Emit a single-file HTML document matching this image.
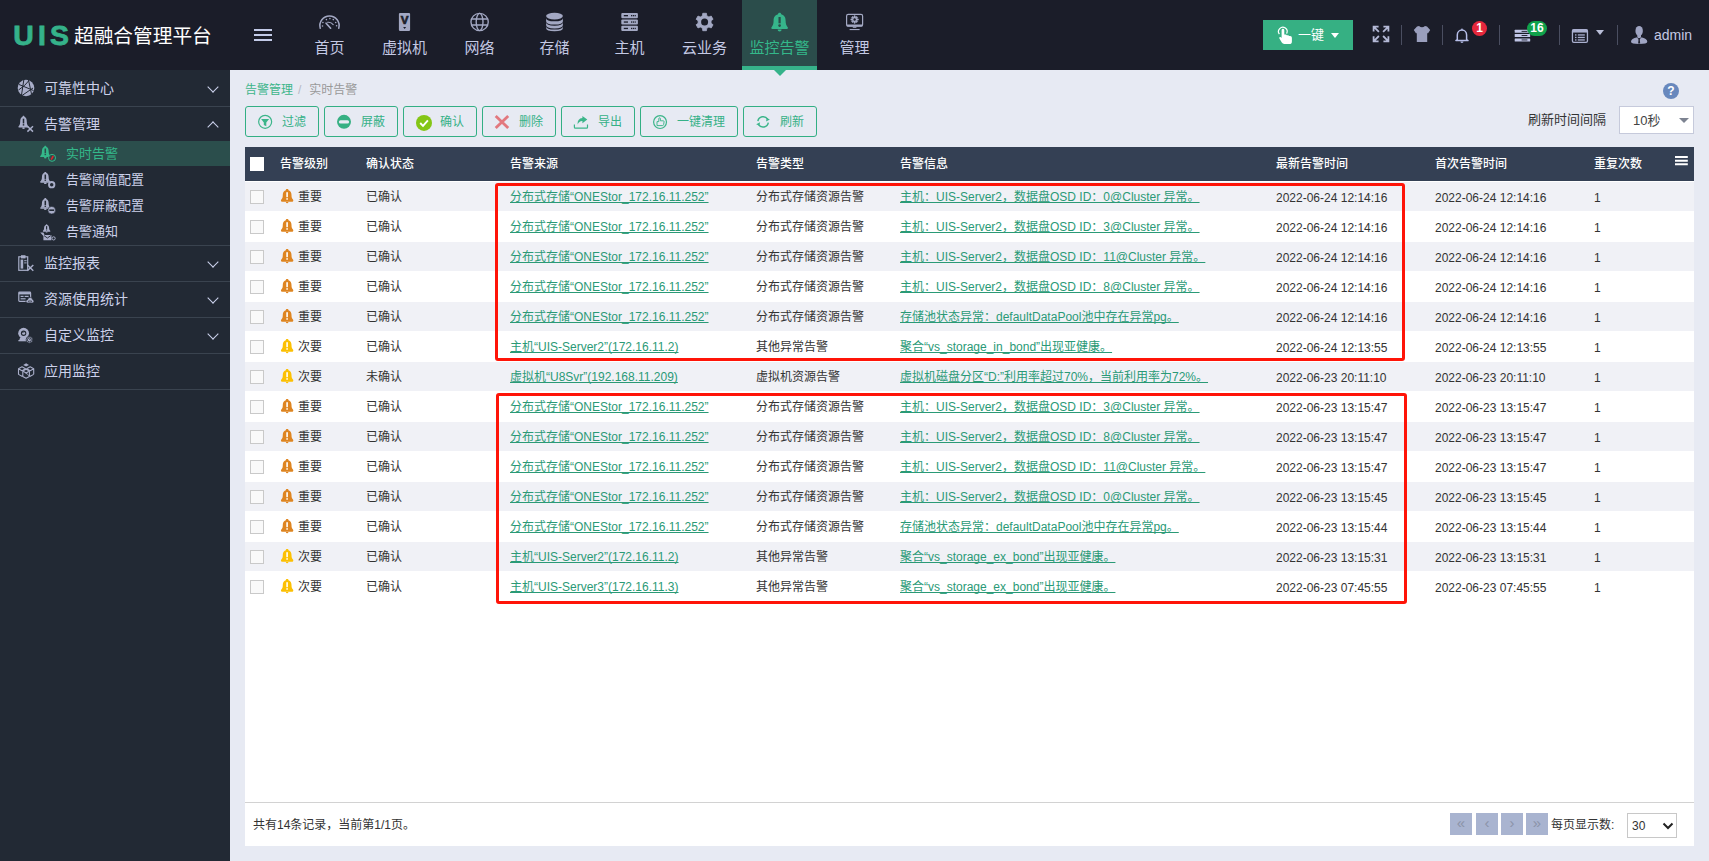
<!DOCTYPE html>
<html lang="zh-CN">
<head>
<meta charset="utf-8">
<title>UIS超融合管理平台 - 实时告警</title>
<style>
*{margin:0;padding:0;box-sizing:border-box}
html,body{width:1709px;height:861px;overflow:hidden}
body{background:#e7eaf3;font-family:"Liberation Sans","Noto Sans CJK SC",sans-serif;font-size:12px;color:#333;position:relative}
i,em,b{font-style:normal;font-weight:normal}
#hdr{position:absolute;left:0;top:0;width:1709px;height:70px;background:#1b1d29}
#logo{position:absolute;left:13.3px;top:20.4px;height:30px;color:#35b28a;font-weight:bold;font-size:28.4px;line-height:30px;letter-spacing:4.1px;white-space:nowrap;-webkit-text-stroke:.8px #35b28a}
#brand{position:absolute;left:74px;top:21px;height:30px;line-height:30px;font-size:19.7px;color:#fff;white-space:nowrap}
#burger{position:absolute;left:254px;top:29px;width:18px}
#burger i{display:block;height:2px;background:#c3cbe8;margin-bottom:3px}
.nav{position:absolute;top:0;width:75px;height:70px}
.nav.act{background:#2b4d4b;border-bottom:4px solid #36b38a}
.nav.act:after{content:"";position:absolute;left:31.5px;top:70px;border:6px solid transparent;border-top-color:#36b38a;border-bottom:0}
.nav .ni{position:absolute;left:0;top:0;width:75px;height:40px}
.nav .nt{position:absolute;left:0;top:36px;width:75px;height:24px;line-height:24px;text-align:center;font-size:15px;color:#c4c9e4;white-space:nowrap}
.nav.act .nt{color:#34b88a}
#onekey{position:absolute;left:1263px;top:20px;width:90px;height:30px;background:#36b083;color:#fff}
#onekey svg{position:absolute;left:13px;top:5px;width:18px;height:20px}
#onekey span{position:absolute;left:35px;top:0;line-height:29px;font-size:13px;white-space:nowrap}
#onekey b{position:absolute;left:68px;top:13px;border:4px solid transparent;border-top:5px solid #fff;border-bottom:0}
.hi{position:absolute}
.sep{position:absolute;top:25px;width:1px;height:20px;background:#4a4e60}
.badge{position:absolute;height:15px;line-height:15px;border-radius:8px;color:#fff;font-size:12px;font-weight:bold;text-align:center}
.badge.r{background:#e5283c}
.badge.g{background:#10a24b}
.caret{position:absolute;border:4px solid transparent;border-top:5px solid #b9bed8;border-bottom:0}
#uname{position:absolute;left:1654px;top:25px;line-height:20px;font-size:14px;color:#c4c9e4}

#side{position:absolute;left:0;top:70px;width:230px;height:791px;background:#222934}
.m1{position:absolute;left:0;width:230px;height:36px;border-top:1px solid #3a434f;color:#ccd1ea;font-size:14px}
.m1.last{height:37px;border-bottom:1px solid #3a434f}
.m1 svg{position:absolute;left:17px;top:8px;width:18px;height:18px}
.m1 span{position:absolute;left:44px;top:0;line-height:35px;white-space:nowrap}
.m1 em{position:absolute;left:209px;width:8px;height:8px;border:solid #cdd3ee;border-width:0 1.5px 1.5px 0}
.m1.first{border-top-color:transparent}
.m1 em.dn{top:12px;transform:rotate(45deg)}
.m1 em.up{top:16px;transform:rotate(-135deg)}
.m2{position:absolute;left:0;width:230px;height:26px;color:#ccd1ea;font-size:13px}
.m2.on{background:#2b4e4c;color:#34b88a;height:25px}
.m2 svg{position:absolute;left:39px;top:4px;width:18px;height:18px}
.m2 span{position:absolute;left:66px;top:0;line-height:25px;white-space:nowrap}

#main{position:absolute;left:0;top:0;width:1709px;height:861px}
#crumb{position:absolute;left:245px;top:80px;line-height:20px;font-size:12px;color:#999;white-space:nowrap}
#crumb a{color:#3cb58a}
#crumb i{margin:0 8px 0 5px;color:#b5b9c6}
#help{position:absolute;left:1663px;top:83px;width:16px;height:16px;border-radius:8px;background:#6888bd;color:#fff;font-size:12px;font-weight:bold;line-height:16px;text-align:center}
.btn{position:absolute;top:106px;height:31px;border:1px solid #32af84;border-radius:3px;color:#35b187;font-size:12px}
.btn svg{position:absolute;left:11px;top:7px;width:16px;height:16px;overflow:visible}
.btn span{position:absolute;left:36px;top:0;line-height:31px;white-space:nowrap}
#rlabel{position:absolute;left:1528px;top:110px;line-height:20px;font-size:13px;color:#333;white-space:nowrap}
#rsel{position:absolute;left:1619px;top:106px;width:75px;height:28px;border:1px solid #c6cadb;background:#fff;font-size:13px;color:#444}
#rsel span{position:absolute;left:13px;top:0;line-height:27px}
#rsel b{position:absolute;left:59px;top:11px;border:5.5px solid transparent;border-top:5.5px solid #7d8391;border-bottom:0}

#grid{position:absolute;left:245px;top:147px;width:1449px;height:699px;background:#fff}
#th{position:absolute;left:0;top:0;width:1449px;height:34px;background:#344054;color:#fff;line-height:34px;font-weight:500}
.hcb{position:absolute;left:5px;top:10px;width:14px;height:14px;background:#fff}
.hm{position:absolute;left:1430px;top:8px;width:13px;height:12px}
.tr{position:relative;height:30px;line-height:32px;top:34px;white-space:nowrap}
.tr.odd{background:#f0f1f6;border-top:1px solid #fff}
.tr.odd>*{margin-top:-1px}
.cb{position:absolute;left:5px;top:9px;width:14px;height:14px;border:1px solid #c9c9c9;background:#f9f9f9}
.lv{position:absolute;left:36px;top:8px;width:12px;height:14px;overflow:visible}
.lv.maj{fill:#de8521}
.lv.min{fill:#fcc004}
.c{position:absolute;top:0;white-space:nowrap}
.c1{left:53px}.c1h{left:35px}.c2{left:121px}.c3{left:265px}.c4{left:511px}.c5{left:655px}.c6{left:1031px}.c7{left:1190px}.c8{left:1349px}
.tr .c.d{top:1px}
.tr a{color:#2a9a76;text-decoration:underline;text-decoration-skip-ink:none}
#pager{position:absolute;left:0;top:655px;width:1449px;height:43px;border-top:1px solid #d2d2d2}
#ptxt{position:absolute;left:8px;top:11px;line-height:22px}
.pb{position:absolute;top:10px;width:22px;height:22px;background:#a9b4d0;color:#8b93a8;text-align:center;line-height:19px;font-size:15px}
#pp{position:absolute;left:1306px;top:11px;line-height:22px}
#psel{position:absolute;left:1382px;top:10px;width:50px;height:25px;border:1px solid #c8c8c8;background:#fff;font-size:12px}
#psel span{position:absolute;left:4px;top:0;line-height:24px}
#psel svg{position:absolute;left:34px;top:8px;width:12px;height:8px}
.redbox{position:absolute;border:3px solid #ff1408;border-radius:3px}

</style>
</head>
<body>
<div id="hdr">
  <div id="logo">UIS</div>
  <div id="brand">超融合管理平台</div>
  <div id="burger"><i></i><i></i><i></i></div>
<div class="nav" style="left:292px"><svg class="ni" viewBox="0 0 75 40"><g fill="none" stroke="#a3a8c3" stroke-linecap="round"><path d="M28.26 28.2 A9.6 9.6 0 1 1 46.74 28.2" stroke-width="1.5"/><path d="M34.1 23.2 L38.6 28.2" stroke-width="1.7"/><path d="M35.6 22.3 A6 6 0 0 1 41.2 24.6" stroke-width="1.1"/></g><g fill="#a3a8c3"><circle cx="30.9" cy="22.5" r=".8"/><circle cx="34.4" cy="19.6" r=".8"/><circle cx="37.9" cy="18.6" r=".8"/><circle cx="41.3" cy="19.6" r=".8"/><circle cx="43.7" cy="22.5" r=".8"/><circle cx="30.5" cy="26" r=".8"/><circle cx="44.6" cy="25.8" r=".8"/></g></svg><div class="nt">首页</div></div>
<div class="nav" style="left:367px"><svg class="ni" viewBox="0 0 75 40"><rect x="31.9" y="12.9" width="11.2" height="18.1" rx="1.2" fill="#a3a8c3"/><text x="37.6" y="24.2" font-size="11.6" font-weight="bold" text-anchor="middle" fill="#1b1d29" stroke="#1b1d29" stroke-width=".7">V</text><path d="M36.1 26.9 L39.1 26.9 L37.6 29.1 Z" fill="#1b1d29"/></svg><div class="nt">虚拟机</div></div>
<div class="nav" style="left:442px"><svg class="ni" viewBox="0 0 75 40"><g fill="none" stroke="#a3a8c3" stroke-width="1.35"><circle cx="37.6" cy="22" r="8.65"/><ellipse cx="37.6" cy="22" rx="3.4" ry="8.65"/><path d="M29.6 19 L45.6 19 M29.6 25 L45.6 25"/></g></svg><div class="nt">网络</div></div>
<div class="nav" style="left:517px"><svg class="ni" viewBox="0 0 75 40"><g fill="#a3a8c3"><ellipse cx="37.5" cy="16.1" rx="8.4" ry="3.3"/><path d="M29.1 18.2 Q29.1 21.3 37.5 21.3 Q45.9 21.3 45.9 18.2 L45.9 21.2 Q45.9 24.6 37.5 24.6 Q29.1 24.6 29.1 21.2 Z"/><path d="M29.1 22.6 Q29.1 25.7 37.5 25.7 Q45.9 25.7 45.9 22.6 L45.9 25 Q45.9 28.4 37.5 28.4 Q29.1 28.4 29.1 25 Z"/><path d="M29.1 26.4 Q29.1 29.5 37.5 29.5 Q45.9 29.5 45.9 26.4 L45.9 27.9 Q45.9 31.2 37.5 31.2 Q29.1 31.2 29.1 27.9 Z"/></g></svg><div class="nt">存储</div></div>
<div class="nav" style="left:592px"><svg class="ni" viewBox="0 0 75 40"><rect x="29.3" y="13.0" width="16.6" height="5.2" rx="1" fill="#a3a8c3"/><rect x="31.8" y="15.0" width="4.2" height="1.3" fill="#1b1d29"/><rect x="39" y="15.0" width="1.2" height="1.3" fill="#1b1d29"/><rect x="40.8" y="15.0" width="1.2" height="1.3" fill="#1b1d29"/><rect x="42.6" y="15.0" width="1.2" height="1.3" fill="#1b1d29"/><rect x="29.3" y="19.4" width="16.6" height="5.2" rx="1" fill="#a3a8c3"/><rect x="31.8" y="21.4" width="4.2" height="1.3" fill="#1b1d29"/><rect x="39" y="21.4" width="1.2" height="1.3" fill="#1b1d29"/><rect x="40.8" y="21.4" width="1.2" height="1.3" fill="#1b1d29"/><rect x="42.6" y="21.4" width="1.2" height="1.3" fill="#1b1d29"/><rect x="29.3" y="25.8" width="16.6" height="5.2" rx="1" fill="#a3a8c3"/><rect x="31.8" y="27.8" width="4.2" height="1.3" fill="#1b1d29"/><rect x="39" y="27.8" width="1.2" height="1.3" fill="#1b1d29"/><rect x="40.8" y="27.8" width="1.2" height="1.3" fill="#1b1d29"/><rect x="42.6" y="27.8" width="1.2" height="1.3" fill="#1b1d29"/></svg><div class="nt">主机</div></div>
<div class="nav" style="left:667px"><svg class="ni" viewBox="0 0 75 40"><path d="M35.43 15.77 L35.75 13.29 L39.45 13.29 L39.77 15.77 L41.91 17.00 L44.21 16.04 L46.06 19.25 L44.08 20.76 L44.08 23.24 L46.06 24.75 L44.21 27.96 L41.91 27.00 L39.77 28.23 L39.45 30.71 L35.75 30.71 L35.43 28.23 L33.29 27.00 L30.99 27.96 L29.14 24.75 L31.12 23.24 L31.12 20.76 L29.14 19.25 L30.99 16.04 L33.29 17.00 Z" fill="#a3a8c3" stroke="#a3a8c3" stroke-width="0.8" stroke-linejoin="round"/><circle cx="37.60" cy="22.00" r="3.50" fill="#1b1d29"/></svg><div class="nt">云业务</div></div>
<div class="nav act" style="left:742px"><svg class="ni" viewBox="0 0 75 40"><path d="M37.6 12.8 C38.6 12.8 39.2 13.5 39.2 14.3 C42.6 15.2 43.6 17.8 43.6 20.5 C43.6 24.3 44.5 25.8 45.7 27.2 C46.3 27.9 45.9 28.9 44.9 28.9 L30.3 28.9 C29.3 28.9 28.9 27.9 29.6 27.2 C30.7 25.8 31.6 24.3 31.6 20.5 C31.6 17.8 32.6 15.2 36 14.3 C36 13.5 36.6 12.8 37.6 12.8 Z" fill="#36b58b"/><path d="M35.6 29.4 L39.6 29.4 A2 2 0 0 1 35.6 29.4 Z" fill="#36b58b"/><rect x="36.5" y="17" width="2.2" height="6.3" fill="#2b4d4b"/><circle cx="37.6" cy="25.6" r="1.35" fill="#2b4d4b"/></svg><div class="nt">监控告警</div></div>
<div class="nav" style="left:817px"><svg class="ni" viewBox="0 0 75 40"><rect x="29.6" y="14.3" width="16" height="11.8" rx="1.6" fill="none" stroke="#a3a8c3" stroke-width="1.2"/><rect x="29.6" y="24.6" width="16" height="2" rx=".8" fill="#a3a8c3"/><rect x="35.8" y="26.6" width="3.6" height="1.2" fill="#a3a8c3"/><rect x="32.6" y="29" width="10" height="1.1" fill="#a3a8c3"/><path d="M36.98 17.08 L37.02 15.85 L38.18 15.85 L38.22 17.08 L38.87 17.35 L39.77 16.51 L40.59 17.33 L39.75 18.23 L40.02 18.88 L41.25 18.92 L41.25 20.08 L40.02 20.12 L39.75 20.77 L40.59 21.67 L39.77 22.49 L38.87 21.65 L38.22 21.92 L38.18 23.15 L37.02 23.15 L36.98 21.92 L36.33 21.65 L35.43 22.49 L34.61 21.67 L35.45 20.77 L35.18 20.12 L33.95 20.08 L33.95 18.92 L35.18 18.88 L35.45 18.23 L34.61 17.33 L35.43 16.51 L36.33 17.35 Z" fill="#a3a8c3" stroke="#a3a8c3" stroke-width="0.8" stroke-linejoin="round"/><circle cx="37.60" cy="19.50" r="1.20" fill="#1b1d29"/></svg><div class="nt">管理</div></div>
  <div id="onekey"><svg viewBox="0 0 18 20"><path d="M3.4 9.2 A4.3 4.3 0 1 1 10.6 8.6" fill="none" stroke="#fff" stroke-width="1.2"/><path d="M5.6 5.2 A1.35 1.35 0 0 1 8.3 5.2 L8.3 9.6 L9.6 9.6 Q10.6 9.6 10.8 10.3 L11.9 10.3 Q12.9 10.3 13.1 11 L14.2 11 Q15.9 11 15.9 12.8 L15.9 16.4 Q15.9 19 13.3 19 L8.3 19 Q6.6 19 5.8 17.6 L3.4 13.6 Q2.9 12.6 3.8 12.1 Q4.7 11.7 5.6 13 Z" fill="#fff"/></svg><span>一键</span><b></b></div>
  <svg class="hi" style="left:1372px;top:25px;width:18px;height:18px" viewBox="0 0 18 18"><g fill="none" stroke="#b4b9d6" stroke-width="1.8"><path d="M6.6 1.6 L1.6 1.6 L1.6 6.6 M1.6 1.6 L6.9 6.9"/><path d="M11.4 1.6 L16.4 1.6 L16.4 6.6 M16.4 1.6 L11.1 6.9"/><path d="M6.6 16.3 L1.6 16.3 L1.6 11.3 M1.6 16.3 L6.9 11"/><path d="M11.4 16.3 L16.4 16.3 L16.4 11.3 M16.4 16.3 L11.1 11"/></g></svg>
  <i class="sep" style="left:1401px"></i>
  <svg class="hi" style="left:1412px;top:25px;width:20px;height:18px" viewBox="0 0 20 18"><path d="M7 0.9 Q10 3.4 13 0.9 L15 1.6 L18.2 5 L15.9 8.4 L15.2 7.8 L15.2 17 L4.8 17 L4.8 7.8 L4.1 8.4 L1.8 5 L5 1.6 Z" fill="#9a9fbd"/></svg>
  <i class="sep" style="left:1442px"></i>
  <svg class="hi" style="left:1453px;top:27px;width:18px;height:18px" viewBox="0 0 18 18"><path d="M4.3 12.6 L4.3 8 A4.65 5 0 0 1 13.6 8 L13.6 12.6 L15 13.6 L2.9 13.6 Z" fill="none" stroke="#b6bee9" stroke-width="1.5" stroke-linejoin="round"/><path d="M7.4 14.6 L10.5 14.6 A1.55 1.3 0 0 1 7.4 14.6 Z" fill="#b6bee9"/><rect x="8.3" y="1.6" width="1.3" height="1.6" fill="#b6bee9"/></svg>
  <span class="badge r" style="left:1472px;top:21px;width:15px">1</span>
  <i class="sep" style="left:1499px"></i>
  <svg class="hi" style="left:1514px;top:28px;width:17px;height:14px" viewBox="0 0 17 14"><rect x="0.7" y="1.8" width="15.5" height="3" rx=".5" fill="#c0c5e6"/><rect x="7.6" y="2.9" width="5.8" height=".9" fill="#1b1d29"/><rect x="0.7" y="6.1" width="15.5" height="3" rx=".5" fill="#c0c5e6"/><rect x="7.6" y="7.1" width="5.8" height=".9" fill="#1b1d29"/><rect x="0.7" y="10.4" width="15.5" height="3" rx=".5" fill="#c0c5e6"/><rect x="7.6" y="11.5" width="5.8" height=".9" fill="#1b1d29"/></svg>
  <span class="badge g" style="left:1527px;top:21px;width:20px">16</span>
  <i class="sep" style="left:1559px"></i>
  <svg class="hi" style="left:1571px;top:28px;width:18px;height:16px" viewBox="0 0 18 16"><rect x="1.45" y="1.55" width="15" height="12.9" rx="1.4" fill="none" stroke="#aab0cf" stroke-width="1.3"/><rect x="1.45" y="1.55" width="15" height="3" fill="#aab0cf"/><g fill="#aab0cf"><rect x="4" y="6.3" width="1.5" height="1.3"/><rect x="6.8" y="6.3" width="7" height="1.3"/><rect x="4" y="8.8" width="1.5" height="1.3"/><rect x="6.8" y="8.8" width="7" height="1.3"/><rect x="4" y="11.3" width="1.5" height="1.3"/><rect x="6.8" y="11.3" width="7" height="1.3"/></g></svg>
  <b class="caret" style="left:1596px;top:30px"></b>
  <i class="sep" style="left:1617px"></i>
  <svg class="hi" style="left:1630px;top:25px;width:18px;height:20px" viewBox="0 0 18 20"><ellipse cx="9.15" cy="5.9" rx="3.7" ry="5" fill="#a0a5c3"/><path d="M7.3 10 L11 10 L11 12.3 Q17.3 13.6 17.3 16.8 Q17.3 19 9.15 19 Q1 19 1 16.8 Q1 13.6 7.3 12.3 Z" fill="#a0a5c3"/><path d="M8.2 13 L10.1 13 L9.7 14.3 L10.2 18.6 L8.1 18.6 L8.6 14.3 Z" fill="#1b1d29"/><path d="M7.3 12.3 L9.15 14.6 L11 12.3" fill="none" stroke="#1b1d29" stroke-width=".7"/></svg>
  <div id="uname">admin</div>
</div>
<div id="side">
  <div class="m1 first" style="top:0"><svg viewBox="0 0 18 18"><circle cx="9" cy="9" r="8.3" fill="#a9aec9"/><g fill="none" stroke="#222934" stroke-width="1"><path d="M2 5.5 L16.5 11.5 M6.8 1 L4.5 16 M11.5 1 L14.5 15 M1.5 11 Q8 7 12 1.5 M5 16.5 L16 9"/></g></svg><span>可靠性中心</span><em class="dn"></em></div>
  <div class="m1" style="top:36px"><svg viewBox="0 0 18 18"><path d="M6.50 0.80 C7.20 0.80 7.50 1.33 7.50 1.86 C9.20 2.52 9.80 4.50 9.80 6.74 C9.80 9.51 10.70 10.57 11.50 11.62 L1.50 11.62 C2.30 10.57 3.20 9.51 3.20 6.74 C3.20 4.50 3.80 2.52 5.50 1.86 C5.50 1.33 5.80 0.80 6.50 0.80 Z" fill="#a9aec9"/><rect x="1.50" y="11.10" width="10.00" height="1.45" rx="0.66" fill="#a9aec9"/><ellipse cx="6.50" cy="13.08" rx="1.30" ry="0.92" fill="#a9aec9"/><rect x="5.75" y="3.70" width="1.50" height="4.75" fill="#222934"/><rect x="5.75" y="9.12" width="1.50" height="1.45" fill="#222934"/><path d="M10.4 11.3 L16 16.6 M16 11.3 L10.4 16.6" stroke="#a9aec9" stroke-width="1.5" fill="none"/></svg><span>告警管理</span><em class="up"></em></div>
  <div class="m2 on" style="top:71px"><svg viewBox="0 0 18 18"><path d="M6.30 0.70 C7.01 0.70 7.32 1.21 7.32 1.72 C9.05 2.36 9.67 4.28 9.67 6.46 C9.67 9.15 10.58 10.17 11.40 11.20 L1.20 11.20 C2.02 10.17 2.93 9.15 2.93 6.46 C2.93 4.28 3.55 2.36 5.28 1.72 C5.28 1.21 5.59 0.70 6.30 0.70 Z" fill="#34b88a"/><rect x="1.20" y="10.68" width="10.20" height="1.41" rx="0.64" fill="#34b88a"/><ellipse cx="6.30" cy="12.60" rx="1.33" ry="0.90" fill="#34b88a"/><rect x="5.54" y="3.52" width="1.53" height="4.61" fill="#2b4e4c"/><rect x="5.54" y="8.76" width="1.53" height="1.41" fill="#2b4e4c"/><circle cx="13.05" cy="12.85" r="3.5" fill="#2b4e4c" stroke="#34b88a" stroke-width="1"/><path d="M12.2 14.6 L14.3 10.8" stroke="#e8222a" stroke-width="1.5"/></svg><span>实时告警</span></div>
  <div class="m2" style="top:97px"><svg viewBox="0 0 18 18"><path d="M6.30 0.90 C7.01 0.90 7.32 1.38 7.32 1.87 C9.05 2.47 9.67 4.29 9.67 6.35 C9.67 8.89 10.58 9.85 11.40 10.82 L1.20 10.82 C2.02 9.85 2.93 8.89 2.93 6.35 C2.93 4.29 3.55 2.47 5.28 1.87 C5.28 1.38 5.59 0.90 6.30 0.90 Z" fill="#a9aec9"/><rect x="1.20" y="10.34" width="10.20" height="1.33" rx="0.60" fill="#a9aec9"/><ellipse cx="6.30" cy="12.15" rx="1.33" ry="0.85" fill="#a9aec9"/><rect x="5.54" y="3.56" width="1.53" height="4.36" fill="#222934"/><rect x="5.54" y="8.52" width="1.53" height="1.33" fill="#222934"/><circle cx="12.7" cy="13.7" r="2.7" fill="#222934" stroke="#a9aec9" stroke-width="1.9"/></svg><span>告警阈值配置</span></div>
  <div class="m2" style="top:123px"><svg viewBox="0 0 18 18"><path d="M6.30 1.10 C7.01 1.10 7.32 1.58 7.32 2.05 C9.05 2.65 9.67 4.43 9.67 6.46 C9.67 8.95 10.58 9.91 11.40 10.86 L1.20 10.86 C2.02 9.91 2.93 8.95 2.93 6.46 C2.93 4.43 3.55 2.65 5.28 2.05 C5.28 1.58 5.59 1.10 6.30 1.10 Z" fill="#a9aec9"/><rect x="1.20" y="10.38" width="10.20" height="1.31" rx="0.60" fill="#a9aec9"/><ellipse cx="6.30" cy="12.17" rx="1.33" ry="0.83" fill="#a9aec9"/><rect x="5.54" y="3.72" width="1.53" height="4.28" fill="#222934"/><rect x="5.54" y="8.60" width="1.53" height="1.31" fill="#222934"/><circle cx="12.7" cy="13.2" r="3.8" fill="#a9aec9" stroke="#222934" stroke-width=".6"/><rect x="10.3" y="12.4" width="4.8" height="1.6" fill="#222934"/></svg><span>告警屏蔽配置</span></div>
  <div class="m2" style="top:149px"><svg viewBox="0 0 18 18"><path d="M7.60 1.30 C8.13 1.30 8.36 1.63 8.36 1.96 C9.65 2.38 10.11 3.62 10.11 5.04 C10.11 6.78 10.79 7.44 11.40 8.11 L3.80 8.11 C4.41 7.44 5.09 6.78 5.09 5.04 C5.09 3.62 5.55 2.38 6.84 1.96 C6.84 1.63 7.07 1.30 7.60 1.30 Z" fill="#a9aec9"/><rect x="3.80" y="7.77" width="7.60" height="0.91" rx="0.42" fill="#a9aec9"/><ellipse cx="7.60" cy="9.02" rx="0.99" ry="0.58" fill="#a9aec9"/><rect x="7.03" y="3.13" width="1.14" height="2.99" fill="#222934"/><rect x="7.03" y="6.53" width="1.14" height="0.91" fill="#222934"/><path d="M1.2 9.6 L4.4 9.6 L5.6 12 L12.4 12 L12.4 17.2 L4.4 17.2 L4.4 13 Z" fill="#a9aec9"/><path d="M5 12.6 L8.4 15 L11.8 12.6" fill="none" stroke="#222934" stroke-width=".9"/><circle cx="14.6" cy="15.4" r="1.6" fill="none" stroke="#a9aec9" stroke-width="1"/></svg><span>告警通知</span></div>
  <div class="m1" style="top:175px"><svg viewBox="0 0 18 18"><rect x="1.8" y="2.8" width="8.9" height="13.5" fill="none" stroke="#a9aec9" stroke-width="1.2"/><rect x="4" y="1.2" width="4.5" height="3.2" fill="#a9aec9"/><rect x="3.6" y="5.6" width="2.6" height="9" fill="#a9aec9"/><rect x="7.2" y="6.2" width="2.4" height="1" fill="#a9aec9"/><rect x="7.2" y="8.4" width="2.4" height="1" fill="#a9aec9"/><path d="M10.3 11 L16.3 16.8 M16.3 11 L10.3 16.8" stroke="#a9aec9" stroke-width="1.5" fill="none"/></svg><span>监控报表</span><em class="dn"></em></div>
  <div class="m1" style="top:211px"><svg viewBox="0 0 18 18"><rect x="1.8" y="2.2" width="11.8" height="9.1" rx=".8" fill="none" stroke="#a9aec9" stroke-width="1.2"/><rect x="1.8" y="2.2" width="11.8" height="2.2" fill="#a9aec9"/><rect x="3.6" y="5.8" width="3" height="1.2" fill="#a9aec9"/><rect x="7.6" y="5.8" width="4" height="1.2" fill="#a9aec9"/><rect x="3.6" y="8.2" width="5" height="1.2" fill="#a9aec9"/><path d="M10.6 13 Q8.9 13 8.9 11.3 Q8.9 9.8 10.5 9.7 Q11 7.3 13.2 7.3 Q15.2 7.3 15.6 9.4 Q17 9.7 17 11.3 Q17 13 15.4 13 Z" fill="#a9aec9" stroke="#222934" stroke-width=".7"/><path d="M11 11.2 L12.4 9.9 L12.4 12.4 Z M15 11.2 L13.6 9.9 L13.6 12.4 Z" fill="#222934"/></svg><span>资源使用统计</span><em class="dn"></em></div>
  <div class="m1" style="top:247px"><svg viewBox="0 0 18 18"><circle cx="6.6" cy="7.2" r="5.4" fill="#a9aec9"/><circle cx="6.6" cy="7.2" r="2.7" fill="#222934"/><circle cx="6.6" cy="7.2" r="1.5" fill="#a9aec9"/><circle cx="6" cy="6.5" r=".6" fill="#222934"/><path d="M3.2 11.6 L2.2 14.2 L11 14.2 L10 11.6 Z" fill="#a9aec9"/><rect x="1.4" y="14" width="10.4" height="1.3" fill="#a9aec9"/><circle cx="12.4" cy="13.85" r="3.3" fill="#a9aec9" stroke="#222934" stroke-width=".8"/><circle cx="12.4" cy="13.85" r="2" fill="none" stroke="#222934" stroke-width=".8"/><path d="M12.4 13.9 L13.5 12.6" stroke="#222934" stroke-width=".8"/></svg><span>自定义监控</span><em class="dn"></em></div>
  <div class="m1 last" style="top:283px"><svg viewBox="0 0 18 18"><g fill="none" stroke="#a9aec9" stroke-width="1.1" stroke-linejoin="round"><path d="M5.00 4.80 L8.50 6.76 L5.00 8.72 L1.50 6.76 Z M1.50 6.76 L1.50 12.36 L5.00 14.32 L8.50 12.36 M8.50 6.76 L8.50 12.36"/><path d="M13.20 4.80 L16.70 6.76 L13.20 8.72 L9.70 6.76 Z M9.70 6.76 L9.70 12.36 L13.20 14.32 L16.70 12.36 M16.70 6.76 L16.70 12.36"/></g><path d="M9.1 1.2 L12 2.9 L9.1 4.6 L6.2 2.9 Z" fill="#a9aec9"/><g fill="#222934" stroke="#a9aec9" stroke-width="1.1" stroke-linejoin="round"><path d="M9.10 7.20 L12.40 9.05 L9.10 10.90 L5.80 9.05 Z M5.80 9.05 L5.80 14.45 L9.10 16.30 L12.40 14.45 M12.40 9.05 L12.40 14.45"/></g></svg><span>应用监控</span></div>
</div>
<div id="main">
  <div id="crumb"><a>告警管理</a><i>/</i><span>实时告警</span></div>
  <div id="help">?</div>
<div class="btn" style="left:245px;width:74px"><svg class="bi" viewBox="0 0 16 16"><circle cx="8.15" cy="7.85" r="6.5" fill="none" stroke="#3cb58a" stroke-width="1.2"/><path d="M4.1 4.9 L12.1 4.9 L9.3 8.4 L9.3 12.2 L6.8 11 L6.8 8.4 Z" fill="#3cb58a"/></svg><span>过滤</span></div>
<div class="btn" style="left:324px;width:74px"><svg class="bi" viewBox="0 0 16 16"><circle cx="8" cy="7.85" r="7" fill="#36b083"/><rect x="2.9" y="6.2" width="10.2" height="3.3" rx="1.6" fill="#e7eaf3"/></svg><span>屏蔽</span></div>
<div class="btn" style="left:403px;width:74px"><svg class="bi" viewBox="0 0 16 16"><circle cx="9" cy="8.9" r="8" fill="#84c616"/><path d="M5.2 9 L8 11.8 L12.9 6.3" fill="none" stroke="#fff" stroke-width="1.9"/></svg><span>确认</span></div>
<div class="btn" style="left:482px;width:74px"><svg class="bi" viewBox="0 0 16 16"><path d="M1.7 1.9 L14.2 14 M14.2 1.9 L1.7 14" stroke="#e2787e" stroke-width="2.8" fill="none"/></svg><span>删除</span></div>
<div class="btn" style="left:561px;width:74px"><svg class="bi" viewBox="0 0 16 16"><path d="M1.4 10.6 L1.4 13.2 Q1.4 14.1 2.3 14.1 L13.6 14.1 Q14.5 14.1 14.5 13.2 L14.5 10.6" fill="none" stroke="#3cb58a" stroke-width="1.2"/><path d="M9.4 1.9 L14.3 5.6 L9.4 9.3 L9.4 7.1 Q6.2 6.9 4.6 10.6 Q4.2 4.6 9.4 4.1 Z" fill="#3cb58a"/></svg><span>导出</span></div>
<div class="btn" style="left:640px;width:98px"><svg class="bi" viewBox="0 0 16 16"><circle cx="8.05" cy="8.05" r="6.45" fill="none" stroke="#3cb58a" stroke-width="1.2"/><path d="M5 7.6 L6.8 7.6 L6.8 4.6 Q6.8 3.8 7.6 3.8 Q8.4 3.8 8.4 4.6 L8.4 6.8 L11.2 6.8 Q12.1 6.8 12.1 7.7 L11.6 10.6 Q11.4 11.6 10.4 11.6 L5 11.6 Z" fill="none" stroke="#3cb58a" stroke-width=".95" stroke-linejoin="round"/></svg><span>一键清理</span></div>
<div class="btn" style="left:743px;width:74px"><svg class="bi" viewBox="0 0 16 16"><g fill="none" stroke="#3cb58a" stroke-width="1.5"><path d="M2.9 7.2 A5.3 5.3 0 0 1 12.6 5.2"/><path d="M13.3 8.6 A5.3 5.3 0 0 1 3.6 10.6"/></g><path d="M14.9 5.6 L11 7.6 L11.8 4 Z" fill="#3cb58a"/><path d="M1.2 10.2 L5.1 8.2 L4.3 11.8 Z" fill="#3cb58a"/></svg><span>刷新</span></div>
  <div id="rlabel">刷新时间间隔</div>
  <div id="rsel"><span>10秒</span><b></b></div>
  <div id="grid">
    <div id="th">
      <span class="hcb"></span>
      <span class="c c1h">告警级别</span><span class="c c2">确认状态</span><span class="c c3">告警来源</span><span class="c c4">告警类型</span>
      <span class="c c5">告警信息</span><span class="c c6">最新告警时间</span><span class="c c7">首次告警时间</span><span class="c c8">重复次数</span>
      <svg class="hm" viewBox="0 0 13 12"><path d="M0 1h12.8v2H0zM0 4.7h12.8v2H0zM0 8.3h12.8v2H0z" fill="#fff"/></svg>
    </div>
<div class="tr odd"><span class="cb"></span><svg class="lv maj" viewBox="0 0 12 14"><path d="M6.15 0 C7 0 7.5 .5 7.5 1.3 C9.7 1.9 10.5 3.9 10.5 6 C10.5 8.6 11.1 9.6 12 10.6 C12.6 11.3 12.4 12.8 11.4 12.8 L.9 12.8 C-.1 12.8 -.3 11.3 .3 10.6 C1.2 9.6 1.8 8.6 1.8 6 C1.8 3.9 2.6 1.9 4.8 1.3 C4.8 .5 5.3 0 6.15 0 Z"/><path d="M4.9 13 L7.4 13 A1.25 1.2 0 0 1 4.9 13 Z"/><rect x="5.3" y="3.2" width="1.6" height="5" fill="#fff"/><rect x="5.3" y="9.2" width="1.6" height="1.5" fill="#fff"/></svg><span class="c c1">重要</span><span class="c c2">已确认</span><span class="c c3"><a>分布式存储“ONEStor_172.16.11.252”</a></span><span class="c c4">分布式存储资源告警</span><span class="c c5"><a>主机：UIS-Server2，数据盘OSD ID：0@Cluster 异常。</a></span><span class="c c6 d">2022-06-24 12:14:16</span><span class="c c7 d">2022-06-24 12:14:16</span><span class="c c8 d">1</span></div>
<div class="tr even"><span class="cb"></span><svg class="lv maj" viewBox="0 0 12 14"><path d="M6.15 0 C7 0 7.5 .5 7.5 1.3 C9.7 1.9 10.5 3.9 10.5 6 C10.5 8.6 11.1 9.6 12 10.6 C12.6 11.3 12.4 12.8 11.4 12.8 L.9 12.8 C-.1 12.8 -.3 11.3 .3 10.6 C1.2 9.6 1.8 8.6 1.8 6 C1.8 3.9 2.6 1.9 4.8 1.3 C4.8 .5 5.3 0 6.15 0 Z"/><path d="M4.9 13 L7.4 13 A1.25 1.2 0 0 1 4.9 13 Z"/><rect x="5.3" y="3.2" width="1.6" height="5" fill="#fff"/><rect x="5.3" y="9.2" width="1.6" height="1.5" fill="#fff"/></svg><span class="c c1">重要</span><span class="c c2">已确认</span><span class="c c3"><a>分布式存储“ONEStor_172.16.11.252”</a></span><span class="c c4">分布式存储资源告警</span><span class="c c5"><a>主机：UIS-Server2，数据盘OSD ID：3@Cluster 异常。</a></span><span class="c c6 d">2022-06-24 12:14:16</span><span class="c c7 d">2022-06-24 12:14:16</span><span class="c c8 d">1</span></div>
<div class="tr odd"><span class="cb"></span><svg class="lv maj" viewBox="0 0 12 14"><path d="M6.15 0 C7 0 7.5 .5 7.5 1.3 C9.7 1.9 10.5 3.9 10.5 6 C10.5 8.6 11.1 9.6 12 10.6 C12.6 11.3 12.4 12.8 11.4 12.8 L.9 12.8 C-.1 12.8 -.3 11.3 .3 10.6 C1.2 9.6 1.8 8.6 1.8 6 C1.8 3.9 2.6 1.9 4.8 1.3 C4.8 .5 5.3 0 6.15 0 Z"/><path d="M4.9 13 L7.4 13 A1.25 1.2 0 0 1 4.9 13 Z"/><rect x="5.3" y="3.2" width="1.6" height="5" fill="#fff"/><rect x="5.3" y="9.2" width="1.6" height="1.5" fill="#fff"/></svg><span class="c c1">重要</span><span class="c c2">已确认</span><span class="c c3"><a>分布式存储“ONEStor_172.16.11.252”</a></span><span class="c c4">分布式存储资源告警</span><span class="c c5"><a>主机：UIS-Server2，数据盘OSD ID：11@Cluster 异常。</a></span><span class="c c6 d">2022-06-24 12:14:16</span><span class="c c7 d">2022-06-24 12:14:16</span><span class="c c8 d">1</span></div>
<div class="tr even"><span class="cb"></span><svg class="lv maj" viewBox="0 0 12 14"><path d="M6.15 0 C7 0 7.5 .5 7.5 1.3 C9.7 1.9 10.5 3.9 10.5 6 C10.5 8.6 11.1 9.6 12 10.6 C12.6 11.3 12.4 12.8 11.4 12.8 L.9 12.8 C-.1 12.8 -.3 11.3 .3 10.6 C1.2 9.6 1.8 8.6 1.8 6 C1.8 3.9 2.6 1.9 4.8 1.3 C4.8 .5 5.3 0 6.15 0 Z"/><path d="M4.9 13 L7.4 13 A1.25 1.2 0 0 1 4.9 13 Z"/><rect x="5.3" y="3.2" width="1.6" height="5" fill="#fff"/><rect x="5.3" y="9.2" width="1.6" height="1.5" fill="#fff"/></svg><span class="c c1">重要</span><span class="c c2">已确认</span><span class="c c3"><a>分布式存储“ONEStor_172.16.11.252”</a></span><span class="c c4">分布式存储资源告警</span><span class="c c5"><a>主机：UIS-Server2，数据盘OSD ID：8@Cluster 异常。</a></span><span class="c c6 d">2022-06-24 12:14:16</span><span class="c c7 d">2022-06-24 12:14:16</span><span class="c c8 d">1</span></div>
<div class="tr odd"><span class="cb"></span><svg class="lv maj" viewBox="0 0 12 14"><path d="M6.15 0 C7 0 7.5 .5 7.5 1.3 C9.7 1.9 10.5 3.9 10.5 6 C10.5 8.6 11.1 9.6 12 10.6 C12.6 11.3 12.4 12.8 11.4 12.8 L.9 12.8 C-.1 12.8 -.3 11.3 .3 10.6 C1.2 9.6 1.8 8.6 1.8 6 C1.8 3.9 2.6 1.9 4.8 1.3 C4.8 .5 5.3 0 6.15 0 Z"/><path d="M4.9 13 L7.4 13 A1.25 1.2 0 0 1 4.9 13 Z"/><rect x="5.3" y="3.2" width="1.6" height="5" fill="#fff"/><rect x="5.3" y="9.2" width="1.6" height="1.5" fill="#fff"/></svg><span class="c c1">重要</span><span class="c c2">已确认</span><span class="c c3"><a>分布式存储“ONEStor_172.16.11.252”</a></span><span class="c c4">分布式存储资源告警</span><span class="c c5"><a>存储池状态异常：defaultDataPool池中存在异常pg。</a></span><span class="c c6 d">2022-06-24 12:14:16</span><span class="c c7 d">2022-06-24 12:14:16</span><span class="c c8 d">1</span></div>
<div class="tr even"><span class="cb"></span><svg class="lv min" viewBox="0 0 12 14"><path d="M6.15 0 C7 0 7.5 .5 7.5 1.3 C9.7 1.9 10.5 3.9 10.5 6 C10.5 8.6 11.1 9.6 12 10.6 C12.6 11.3 12.4 12.8 11.4 12.8 L.9 12.8 C-.1 12.8 -.3 11.3 .3 10.6 C1.2 9.6 1.8 8.6 1.8 6 C1.8 3.9 2.6 1.9 4.8 1.3 C4.8 .5 5.3 0 6.15 0 Z"/><path d="M4.9 13 L7.4 13 A1.25 1.2 0 0 1 4.9 13 Z"/><rect x="5.3" y="3.2" width="1.6" height="5" fill="#fff"/><rect x="5.3" y="9.2" width="1.6" height="1.5" fill="#fff"/></svg><span class="c c1">次要</span><span class="c c2">已确认</span><span class="c c3"><a>主机“UIS-Server2”(172.16.11.2)</a></span><span class="c c4">其他异常告警</span><span class="c c5"><a>聚合“vs_storage_in_bond”出现亚健康。</a></span><span class="c c6 d">2022-06-24 12:13:55</span><span class="c c7 d">2022-06-24 12:13:55</span><span class="c c8 d">1</span></div>
<div class="tr odd"><span class="cb"></span><svg class="lv min" viewBox="0 0 12 14"><path d="M6.15 0 C7 0 7.5 .5 7.5 1.3 C9.7 1.9 10.5 3.9 10.5 6 C10.5 8.6 11.1 9.6 12 10.6 C12.6 11.3 12.4 12.8 11.4 12.8 L.9 12.8 C-.1 12.8 -.3 11.3 .3 10.6 C1.2 9.6 1.8 8.6 1.8 6 C1.8 3.9 2.6 1.9 4.8 1.3 C4.8 .5 5.3 0 6.15 0 Z"/><path d="M4.9 13 L7.4 13 A1.25 1.2 0 0 1 4.9 13 Z"/><rect x="5.3" y="3.2" width="1.6" height="5" fill="#fff"/><rect x="5.3" y="9.2" width="1.6" height="1.5" fill="#fff"/></svg><span class="c c1">次要</span><span class="c c2">未确认</span><span class="c c3"><a>虚拟机“U8Svr”(192.168.11.209)</a></span><span class="c c4">虚拟机资源告警</span><span class="c c5"><a>虚拟机磁盘分区“D:”利用率超过70%，当前利用率为72%。</a></span><span class="c c6 d">2022-06-23 20:11:10</span><span class="c c7 d">2022-06-23 20:11:10</span><span class="c c8 d">1</span></div>
<div class="tr even"><span class="cb"></span><svg class="lv maj" viewBox="0 0 12 14"><path d="M6.15 0 C7 0 7.5 .5 7.5 1.3 C9.7 1.9 10.5 3.9 10.5 6 C10.5 8.6 11.1 9.6 12 10.6 C12.6 11.3 12.4 12.8 11.4 12.8 L.9 12.8 C-.1 12.8 -.3 11.3 .3 10.6 C1.2 9.6 1.8 8.6 1.8 6 C1.8 3.9 2.6 1.9 4.8 1.3 C4.8 .5 5.3 0 6.15 0 Z"/><path d="M4.9 13 L7.4 13 A1.25 1.2 0 0 1 4.9 13 Z"/><rect x="5.3" y="3.2" width="1.6" height="5" fill="#fff"/><rect x="5.3" y="9.2" width="1.6" height="1.5" fill="#fff"/></svg><span class="c c1">重要</span><span class="c c2">已确认</span><span class="c c3"><a>分布式存储“ONEStor_172.16.11.252”</a></span><span class="c c4">分布式存储资源告警</span><span class="c c5"><a>主机：UIS-Server2，数据盘OSD ID：3@Cluster 异常。</a></span><span class="c c6 d">2022-06-23 13:15:47</span><span class="c c7 d">2022-06-23 13:15:47</span><span class="c c8 d">1</span></div>
<div class="tr odd"><span class="cb"></span><svg class="lv maj" viewBox="0 0 12 14"><path d="M6.15 0 C7 0 7.5 .5 7.5 1.3 C9.7 1.9 10.5 3.9 10.5 6 C10.5 8.6 11.1 9.6 12 10.6 C12.6 11.3 12.4 12.8 11.4 12.8 L.9 12.8 C-.1 12.8 -.3 11.3 .3 10.6 C1.2 9.6 1.8 8.6 1.8 6 C1.8 3.9 2.6 1.9 4.8 1.3 C4.8 .5 5.3 0 6.15 0 Z"/><path d="M4.9 13 L7.4 13 A1.25 1.2 0 0 1 4.9 13 Z"/><rect x="5.3" y="3.2" width="1.6" height="5" fill="#fff"/><rect x="5.3" y="9.2" width="1.6" height="1.5" fill="#fff"/></svg><span class="c c1">重要</span><span class="c c2">已确认</span><span class="c c3"><a>分布式存储“ONEStor_172.16.11.252”</a></span><span class="c c4">分布式存储资源告警</span><span class="c c5"><a>主机：UIS-Server2，数据盘OSD ID：8@Cluster 异常。</a></span><span class="c c6 d">2022-06-23 13:15:47</span><span class="c c7 d">2022-06-23 13:15:47</span><span class="c c8 d">1</span></div>
<div class="tr even"><span class="cb"></span><svg class="lv maj" viewBox="0 0 12 14"><path d="M6.15 0 C7 0 7.5 .5 7.5 1.3 C9.7 1.9 10.5 3.9 10.5 6 C10.5 8.6 11.1 9.6 12 10.6 C12.6 11.3 12.4 12.8 11.4 12.8 L.9 12.8 C-.1 12.8 -.3 11.3 .3 10.6 C1.2 9.6 1.8 8.6 1.8 6 C1.8 3.9 2.6 1.9 4.8 1.3 C4.8 .5 5.3 0 6.15 0 Z"/><path d="M4.9 13 L7.4 13 A1.25 1.2 0 0 1 4.9 13 Z"/><rect x="5.3" y="3.2" width="1.6" height="5" fill="#fff"/><rect x="5.3" y="9.2" width="1.6" height="1.5" fill="#fff"/></svg><span class="c c1">重要</span><span class="c c2">已确认</span><span class="c c3"><a>分布式存储“ONEStor_172.16.11.252”</a></span><span class="c c4">分布式存储资源告警</span><span class="c c5"><a>主机：UIS-Server2，数据盘OSD ID：11@Cluster 异常。</a></span><span class="c c6 d">2022-06-23 13:15:47</span><span class="c c7 d">2022-06-23 13:15:47</span><span class="c c8 d">1</span></div>
<div class="tr odd"><span class="cb"></span><svg class="lv maj" viewBox="0 0 12 14"><path d="M6.15 0 C7 0 7.5 .5 7.5 1.3 C9.7 1.9 10.5 3.9 10.5 6 C10.5 8.6 11.1 9.6 12 10.6 C12.6 11.3 12.4 12.8 11.4 12.8 L.9 12.8 C-.1 12.8 -.3 11.3 .3 10.6 C1.2 9.6 1.8 8.6 1.8 6 C1.8 3.9 2.6 1.9 4.8 1.3 C4.8 .5 5.3 0 6.15 0 Z"/><path d="M4.9 13 L7.4 13 A1.25 1.2 0 0 1 4.9 13 Z"/><rect x="5.3" y="3.2" width="1.6" height="5" fill="#fff"/><rect x="5.3" y="9.2" width="1.6" height="1.5" fill="#fff"/></svg><span class="c c1">重要</span><span class="c c2">已确认</span><span class="c c3"><a>分布式存储“ONEStor_172.16.11.252”</a></span><span class="c c4">分布式存储资源告警</span><span class="c c5"><a>主机：UIS-Server2，数据盘OSD ID：0@Cluster 异常。</a></span><span class="c c6 d">2022-06-23 13:15:45</span><span class="c c7 d">2022-06-23 13:15:45</span><span class="c c8 d">1</span></div>
<div class="tr even"><span class="cb"></span><svg class="lv maj" viewBox="0 0 12 14"><path d="M6.15 0 C7 0 7.5 .5 7.5 1.3 C9.7 1.9 10.5 3.9 10.5 6 C10.5 8.6 11.1 9.6 12 10.6 C12.6 11.3 12.4 12.8 11.4 12.8 L.9 12.8 C-.1 12.8 -.3 11.3 .3 10.6 C1.2 9.6 1.8 8.6 1.8 6 C1.8 3.9 2.6 1.9 4.8 1.3 C4.8 .5 5.3 0 6.15 0 Z"/><path d="M4.9 13 L7.4 13 A1.25 1.2 0 0 1 4.9 13 Z"/><rect x="5.3" y="3.2" width="1.6" height="5" fill="#fff"/><rect x="5.3" y="9.2" width="1.6" height="1.5" fill="#fff"/></svg><span class="c c1">重要</span><span class="c c2">已确认</span><span class="c c3"><a>分布式存储“ONEStor_172.16.11.252”</a></span><span class="c c4">分布式存储资源告警</span><span class="c c5"><a>存储池状态异常：defaultDataPool池中存在异常pg。</a></span><span class="c c6 d">2022-06-23 13:15:44</span><span class="c c7 d">2022-06-23 13:15:44</span><span class="c c8 d">1</span></div>
<div class="tr odd"><span class="cb"></span><svg class="lv min" viewBox="0 0 12 14"><path d="M6.15 0 C7 0 7.5 .5 7.5 1.3 C9.7 1.9 10.5 3.9 10.5 6 C10.5 8.6 11.1 9.6 12 10.6 C12.6 11.3 12.4 12.8 11.4 12.8 L.9 12.8 C-.1 12.8 -.3 11.3 .3 10.6 C1.2 9.6 1.8 8.6 1.8 6 C1.8 3.9 2.6 1.9 4.8 1.3 C4.8 .5 5.3 0 6.15 0 Z"/><path d="M4.9 13 L7.4 13 A1.25 1.2 0 0 1 4.9 13 Z"/><rect x="5.3" y="3.2" width="1.6" height="5" fill="#fff"/><rect x="5.3" y="9.2" width="1.6" height="1.5" fill="#fff"/></svg><span class="c c1">次要</span><span class="c c2">已确认</span><span class="c c3"><a>主机“UIS-Server2”(172.16.11.2)</a></span><span class="c c4">其他异常告警</span><span class="c c5"><a>聚合“vs_storage_ex_bond”出现亚健康。</a></span><span class="c c6 d">2022-06-23 13:15:31</span><span class="c c7 d">2022-06-23 13:15:31</span><span class="c c8 d">1</span></div>
<div class="tr even"><span class="cb"></span><svg class="lv min" viewBox="0 0 12 14"><path d="M6.15 0 C7 0 7.5 .5 7.5 1.3 C9.7 1.9 10.5 3.9 10.5 6 C10.5 8.6 11.1 9.6 12 10.6 C12.6 11.3 12.4 12.8 11.4 12.8 L.9 12.8 C-.1 12.8 -.3 11.3 .3 10.6 C1.2 9.6 1.8 8.6 1.8 6 C1.8 3.9 2.6 1.9 4.8 1.3 C4.8 .5 5.3 0 6.15 0 Z"/><path d="M4.9 13 L7.4 13 A1.25 1.2 0 0 1 4.9 13 Z"/><rect x="5.3" y="3.2" width="1.6" height="5" fill="#fff"/><rect x="5.3" y="9.2" width="1.6" height="1.5" fill="#fff"/></svg><span class="c c1">次要</span><span class="c c2">已确认</span><span class="c c3"><a>主机“UIS-Server3”(172.16.11.3)</a></span><span class="c c4">其他异常告警</span><span class="c c5"><a>聚合“vs_storage_ex_bond”出现亚健康。</a></span><span class="c c6 d">2022-06-23 07:45:55</span><span class="c c7 d">2022-06-23 07:45:55</span><span class="c c8 d">1</span></div>
    <div id="pager">
      <span id="ptxt">共有14条记录，当前第1/1页。</span>
      <span class="pb" style="left:1205px">«</span><span class="pb" style="left:1231px">‹</span><span class="pb" style="left:1256px">›</span><span class="pb" style="left:1281px">»</span>
      <span id="pp">每页显示数:</span>
      <span id="psel"><span>30</span><svg viewBox="0 0 12 8"><path d="M1.5 1.5 L6 6 L10.5 1.5" fill="none" stroke="#222" stroke-width="2"/></svg></span>
    </div>
  </div>
  <div class="redbox" style="left:495px;top:183px;width:910px;height:178px"></div>
  <div class="redbox" style="left:496px;top:393px;width:911px;height:211px"></div>
</div>
</body>
</html>
